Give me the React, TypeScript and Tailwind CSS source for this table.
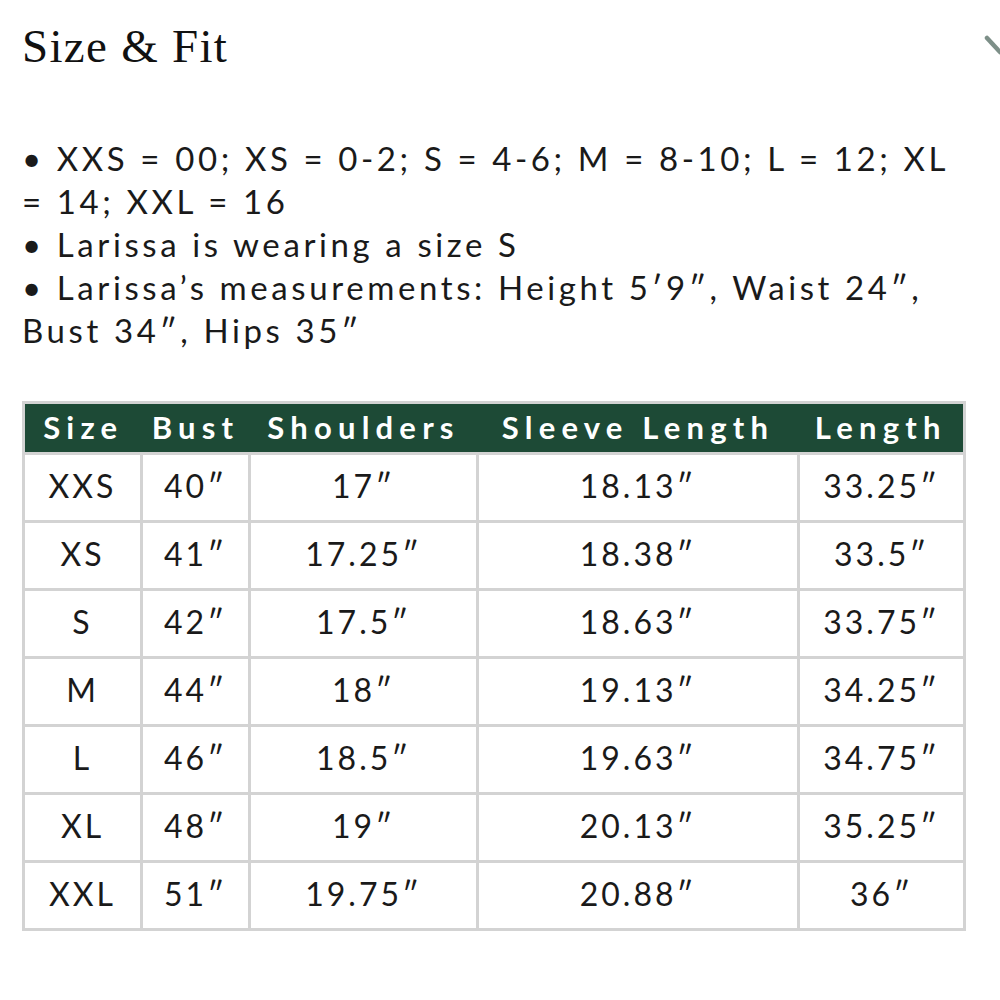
import React from "react";

const rows: string[][] = [
  ["XXS", "40″", "17″", "18.13″", "33.25″"],
  ["XS", "41″", "17.25″", "18.38″", "33.5″"],
  ["S", "42″", "17.5″", "18.63″", "33.75″"],
  ["M", "44″", "18″", "19.13″", "34.25″"],
  ["L", "46″", "18.5″", "19.63″", "34.75″"],
  ["XL", "48″", "19″", "20.13″", "35.25″"],
  ["XXL", "51″", "19.75″", "20.88″", "36″"],
];

const heads = ["Size", "Bust", "Shoulders", "Sleeve Length", "Length"];
const widths = ["w-[118px]", "w-[108px]", "w-[228px]", "w-[321px]", "w-[166px]"];

export default function App() {
  return (
    <div className="relative w-[1000px] h-[1000px] overflow-hidden bg-white text-[#1a1a1a]">
      <svg
        className="absolute right-0 top-[34px]"
        width="16"
        height="26"
        viewBox="0 0 16 26"
      >
        <path d="M3 4 L16 18" stroke="#7d8f88" strokeWidth="4.5" strokeLinecap="round" fill="none" />
      </svg>
      <div className="pl-[22px] pt-[21px]">
        <h1 className="font-['Liberation_Serif',serif] text-[47px] leading-[50px] tracking-[1.3px] text-[#111]">
          Size &amp; Fit
        </h1>
        <div className="mt-[66px] font-['Lato',sans-serif] text-[33px] leading-[43px] tracking-[3.6px] whitespace-nowrap">
          <div>• XXS = 00; XS = 0-2; S = 4-6; M = 8-10; L = 12; XL</div>
          <div>= 14; XXL = 16</div>
          <div>• Larissa is wearing a size S</div>
          <div>• Larissa’s measurements: Height 5′9″, Waist 24″,</div>
          <div>Bust 34″, Hips 35″</div>
        </div>
        <table className="mt-[49px] w-[941px] table-fixed border-collapse border-[3px] border-[#d3d3d3] font-['Lato',sans-serif]">
          <thead>
            <tr className="h-[50px] bg-[#1d4a36]">
              {heads.map((h, i) => (
                <th
                  key={h}
                  className={`${widths[i]} p-0 pb-[1px] text-center text-[31px] font-bold tracking-[6.2px] text-white`}
                >
                  {h}
                </th>
              ))}
            </tr>
          </thead>
          <tbody>
            {rows.map((r) => (
              <tr key={r[0]} className="h-[68px]">
                {r.map((c, i) => (
                  <td
                    key={i}
                    className="border-[3px] border-[#d3d3d3] p-0 pb-[2px] text-center text-[32px] tracking-[3px] text-[#1a1a1a]"
                  >
                    {c}
                  </td>
                ))}
              </tr>
            ))}
          </tbody>
        </table>
      </div>
    </div>
  );
}
